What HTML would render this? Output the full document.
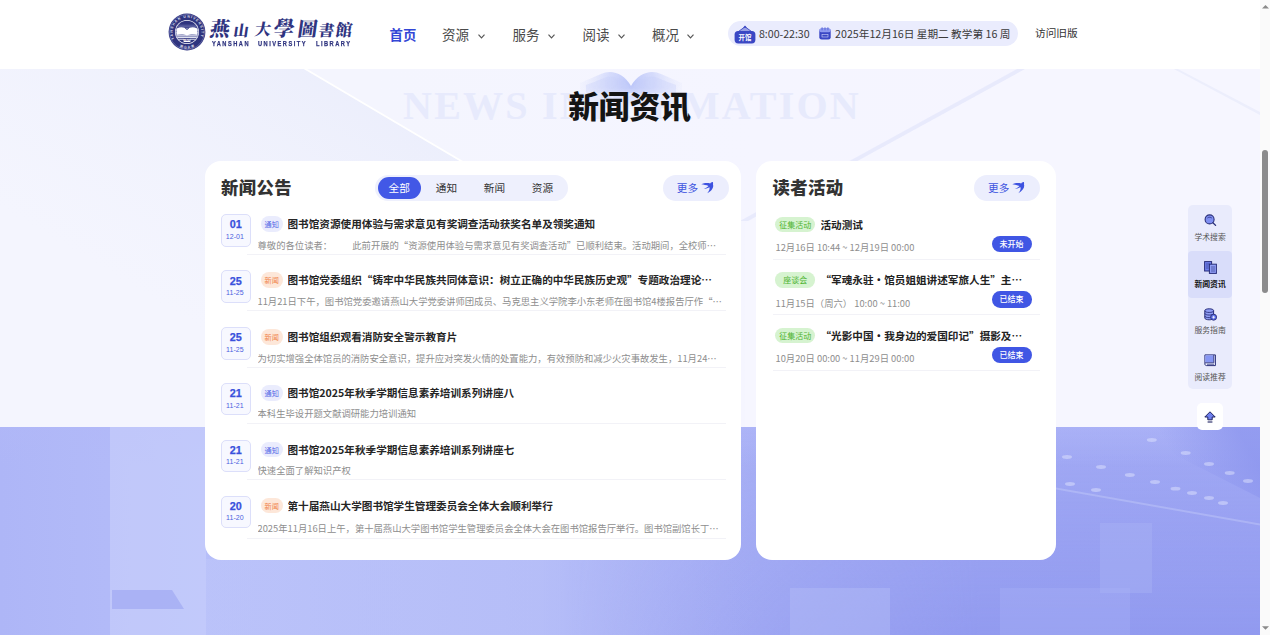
<!DOCTYPE html>
<html lang="zh-CN">
<head>
<meta charset="utf-8">
<title>燕山大学图书馆</title>
<style>
*{box-sizing:border-box;margin:0;padding:0}
html,body{width:1270px;height:635px;overflow:hidden;background:#f4f5ff;}
body{position:relative;font-family:"Noto Sans CJK SC","Liberation Sans",sans-serif;color:#1a1a1a;}
.abs{position:absolute}
#bg{position:absolute;left:0;top:68px;width:1260px;height:567px;overflow:hidden}
#header{position:absolute;left:0;top:0;width:1260px;height:68.8px;background:#fff}
#logocn{left:210px;top:10px;width:145px;height:36px;font-family:"Noto Serif CJK SC","Liberation Serif",serif;font-weight:900;color:#2f347f;white-space:nowrap}
#logocn span{position:absolute;text-align:center;transform:skewX(-8deg)}
#logoen{left:212.1px;top:40.2px;width:140px;height:8px;font-family:"Liberation Sans",sans-serif;font-weight:bold;font-size:7.3px;line-height:8px;letter-spacing:1.9px;color:#2f347f;white-space:nowrap}
#logoen span{position:absolute;top:0;-webkit-text-stroke:0.25px #2f347f;transform:scaleX(0.78);transform-origin:0 0}
.nav{position:absolute;top:22.9px;font-size:13.5px;line-height:22px;color:#4a4a4a;white-space:nowrap}
.nav.on{color:#3347d6;font-weight:bold;font-size:13.4px}
.chv{top:33.6px}
#pill{position:absolute;left:727.5px;top:20.7px;width:290.6px;height:25.8px;border-radius:13px;background:#eaecfd;font-size:10.67px;color:#3a3a3a;white-space:nowrap}
#ptime{left:31.5px;top:0.5px;line-height:25.8px;letter-spacing:-0.05px}
#pdate{left:107.6px;top:0.5px;line-height:25.8px}
#old{position:absolute;left:1035px;top:23.5px;font-size:10.67px;line-height:18px;color:#333;white-space:nowrap}
#bigen{position:absolute;left:0;top:83px;width:1259px;text-align:center;font-family:"Liberation Serif",serif;font-weight:bold;font-size:40px;letter-spacing:2.2px;color:#e7eafc;line-height:46px;white-space:nowrap;padding-left:5px}
#bigcn{position:absolute;left:0;top:83.2px;width:1259px;text-align:center;font-weight:900;font-size:30.67px;line-height:44px;color:#141414;white-space:nowrap}
.card{position:absolute;top:161px;height:398.7px;background:#fff;border-radius:16px}
#c1{left:205px;width:536.3px}
#c2{left:755.5px;width:300.5px}
.ctitle{position:absolute;top:13.1px;font-size:17.33px;font-weight:900;letter-spacing:0.4px;line-height:26px;color:#333;white-space:nowrap}
.more{position:absolute;top:14px;width:65.5px;height:26px;border-radius:13px;background:#eceefd;color:#4055e0;font-size:10.67px;line-height:26px;padding-left:13.8px;white-space:nowrap}
.more .sw{left:38.3px;top:7.3px}
#tabs{position:absolute;left:169.5px;top:13.6px;width:193px;height:26.4px;border-radius:13.2px;background:#eef0fd;font-size:10.67px;line-height:26.4px;color:#333}
#tabs span{position:absolute;top:0;text-align:center;white-space:nowrap}
#tabs .on{left:3px;top:2.3px;width:43.4px;height:21.8px;line-height:21.8px;border-radius:11px;background:#4258e6;color:#fff}
.item{position:absolute;left:16px;width:508px;height:56px}
.date{position:absolute;left:0;top:0;width:30.2px;height:32.6px;border:1px solid #dcdffa;border-radius:5px;background:#f7f8ff;text-align:center;color:#3a50dc;font-family:"Liberation Sans",sans-serif}
.date b{display:block;position:relative;left:-0.4px;-webkit-text-stroke:0.25px #3a50dc;font-size:10.8px;line-height:13px;margin-top:3.3px}
.date i{display:block;position:relative;left:-1.2px;font-style:normal;font-size:7px;line-height:8px;margin-top:1.5px;color:#4a5ee0;letter-spacing:0.1px}
.tag{position:absolute;left:39.5px;top:2px;width:22.5px;height:15.8px;border-radius:8px;font-size:7.2px;line-height:17.4px;text-align:center;white-space:nowrap}
.tag.tz{background:#eaecfd;color:#5568e6}
.tag.xw{background:#fde7d9;color:#f0844a}
.ttl{position:absolute;left:66.5px;top:0;font-size:10.62px;font-weight:bold;line-height:20px;color:#262626;white-space:nowrap;width:430px;overflow:hidden;text-overflow:ellipsis}
.desc{position:absolute;left:36.5px;top:21.5px;font-size:9.33px;line-height:18px;color:#8e8e8e;white-space:nowrap;width:465px;overflow:hidden;text-overflow:ellipsis}
.gap{display:inline-block;width:20.1px;overflow:hidden;vertical-align:top}
.line{position:absolute;left:26px;right:3px;top:39.8px;height:1px;background:#f2f2f7}
.item.last .desc{top:23.5px}
.item.last .line{top:42.9px}
.act{position:absolute;left:17px;width:267px;height:56px}
.gtag{position:absolute;left:2.7px;top:0.4px;width:40.3px;height:15.2px;border-radius:7.6px;background:#d6f3d0;color:#4fb432;font-size:8px;line-height:15.2px;text-align:center;white-space:nowrap}
.attl{position:absolute;left:48px;top:-1.6px;width:206px;font-size:10.62px;font-weight:bold;line-height:20px;color:#222;white-space:nowrap;overflow:hidden;text-overflow:ellipsis}
.atime{position:absolute;left:3px;top:21.5px;font-size:9.33px;line-height:18px;color:#8e8e8e;white-space:nowrap}
.st{position:absolute;left:219px;top:19.3px;width:40px;height:16.4px;border-radius:8.2px;background:#4056e4;color:#fff;font-size:8px;line-height:16.4px;text-align:center;font-weight:500;white-space:nowrap}
.aline{position:absolute;left:0;right:0;top:42px;height:1px;background:#f2f2f7}
#side{position:absolute;left:1187.8px;top:204.6px;width:44.6px;height:184px;border-radius:5px;background:#e9ebfc}
.sit{position:absolute;left:0;width:44.6px;height:46.5px;text-align:center;font-size:7.8px;color:#555;border-radius:4px}
.sit.on{background:#d9ddfa;color:#111;font-weight:bold}
.sit .sic{left:15.8px;top:10px}
.sit span{position:absolute;left:0;width:44.6px;top:26.5px;line-height:12px;white-space:nowrap}
#up{position:absolute;left:1196.8px;top:402.6px;width:26.6px;height:27.2px;border-radius:5px;background:#fff}
#sb{position:absolute;left:1260px;top:0;width:10px;height:635px;background:#fafafa}
#sbt{position:absolute;left:2px;top:150px;width:6px;height:143px;border-radius:3px;background:#8b8b8b}
</style>
</head>
<body>
<div id="bg">
  <svg class="abs" style="left:0;top:0" width="1260" height="567" viewBox="0 0 1260 567">
    <defs>
      <linearGradient id="gtop" x1="0" y1="0" x2="1" y2="0">
        <stop offset="0" stop-color="#f4f5fe"/><stop offset="0.3" stop-color="#f4f5fe"/><stop offset="0.6" stop-color="#f5f5ff"/><stop offset="1" stop-color="#f6f5ff"/>
      </linearGradient>
      <linearGradient id="gbh" x1="0" y1="0" x2="1" y2="0">
        <stop offset="0" stop-color="#aeb6f7"/><stop offset="0.085" stop-color="#b2baf8"/><stop offset="0.165" stop-color="#b6bef9"/><stop offset="0.4" stop-color="#b0b8f7"/><stop offset="0.55" stop-color="#aab2f6"/><stop offset="0.65" stop-color="#a6aef5"/><stop offset="0.85" stop-color="#a3abf5"/><stop offset="1" stop-color="#a2aaf5"/>
      </linearGradient>
      <linearGradient id="gbv" x1="0" y1="0" x2="0" y2="1">
        <stop offset="0" stop-color="#8790ec" stop-opacity="0"/><stop offset="0.35" stop-color="#8790ec" stop-opacity="0.25"/><stop offset="1" stop-color="#8790ec" stop-opacity="0.62"/>
      </linearGradient>
      <linearGradient id="gmk" x1="0" y1="0" x2="1" y2="0"><stop offset="0" stop-color="#000"/><stop offset="0.6" stop-color="#fff"/><stop offset="1" stop-color="#fff"/></linearGradient>
      <mask id="mk" maskUnits="userSpaceOnUse" x="560" y="358" width="700" height="210"><rect x="560" y="358" width="700" height="210" fill="url(#gmk)"/></mask>
      <linearGradient id="gtopfade" x1="0" y1="0" x2="0" y2="1"><stop offset="0" stop-color="#b1b8f8" stop-opacity="0.5"/><stop offset="1" stop-color="#b1b8f8" stop-opacity="0"/></linearGradient>
      <linearGradient id="gfl" gradientUnits="userSpaceOnUse" x1="400" y1="40" x2="250" y2="290"><stop offset="0" stop-color="#e9ecfb" stop-opacity="0.75"/><stop offset="1" stop-color="#eef0fc" stop-opacity="0"/></linearGradient>
      <linearGradient id="gbs" x1="0" y1="0" x2="1" y2="0"><stop offset="0" stop-color="#bec6fa" stop-opacity="0.55"/><stop offset="0.6" stop-color="#bcc4f9" stop-opacity="0.5"/><stop offset="1" stop-color="#a8b0f5" stop-opacity="0"/></linearGradient>
      <linearGradient id="gcr" gradientUnits="userSpaceOnUse" x1="1180" y1="400" x2="1240" y2="365"><stop offset="0" stop-color="#8c95ee" stop-opacity="0"/><stop offset="1" stop-color="#8c95ee" stop-opacity="0.75"/></linearGradient>
      <linearGradient id="gln" x1="0" y1="0" x2="1" y2="0">
        <stop offset="0" stop-color="#e4e7fb" stop-opacity="0"/><stop offset="0.5" stop-color="#e2e5fb"/><stop offset="1" stop-color="#e4e7fb" stop-opacity="0"/>
      </linearGradient>
    </defs>
    <rect x="0" y="0" width="1260" height="359" fill="url(#gtop)"/>
    <path d="M0 0 L303 0 L460 93 L460 300 L0 300 Z" fill="url(#gfl)"/>
    <path d="M302 0 L305.5 0 L463 93 L459.5 93 Z" fill="#fff"/>
    <path d="M1019 0 L1027 0 L748 153 L740 153 Z" fill="#e3e6fb" opacity="0.7"/>
    <path d="M1027 0 L1260 0 L1260 359 L745 359 L745 155 Z" fill="#f7f6ff" opacity="0.6"/>
    <path d="M1172 0 L1176 0 L1260 44 L1260 47 Z" fill="#eceefc"/>
    <rect x="0" y="359" width="1260" height="208" fill="url(#gbh)"/>
    <rect x="560" y="359" width="700" height="208" fill="url(#gbv)" mask="url(#mk)"/>
    <rect x="0" y="359" width="1260" height="40" fill="url(#gtopfade)"/>
    <rect x="110" y="359" width="96" height="208" fill="#c9d0fc" opacity="0.6"/>
    <path d="M112 522 L172 522 L184 541 L112 541 Z" fill="#98a1f0" opacity="0.55"/>
    <rect x="206" y="491" width="560" height="76" fill="url(#gbs)"/>
    <rect x="790" y="520" width="100" height="47" fill="#b4bcf7" opacity="0.45"/>
    <rect x="1000" y="520" width="130" height="47" fill="#a9b1f5" opacity="0.35"/>
    <path d="M1120 359 L1260 359 L1260 430 Z" fill="url(#gcr)"/>
    <rect x="1100" y="455" width="52" height="70" fill="#aab3f6" opacity="0.4"/>
    <ellipse cx="1151.8" cy="372.0" rx="5" ry="1.9" fill="#dfe3fd" opacity="0.5"/><ellipse cx="1185.7" cy="385.0" rx="5" ry="1.9" fill="#dfe3fd" opacity="0.5"/><ellipse cx="1209.0" cy="396.0" rx="5" ry="1.9" fill="#dfe3fd" opacity="0.5"/><ellipse cx="1229.7" cy="405.0" rx="5" ry="1.9" fill="#dfe3fd" opacity="0.5"/><ellipse cx="1248.0" cy="413.0" rx="5" ry="1.9" fill="#dfe3fd" opacity="0.5"/><ellipse cx="1067.0" cy="389.0" rx="5" ry="1.9" fill="#dfe3fd" opacity="0.5"/><ellipse cx="1101.0" cy="399.0" rx="5" ry="1.9" fill="#dfe3fd" opacity="0.5"/><ellipse cx="1129.8" cy="407.0" rx="5" ry="1.9" fill="#dfe3fd" opacity="0.5"/><ellipse cx="1155.0" cy="414.0" rx="5" ry="1.9" fill="#dfe3fd" opacity="0.5"/><ellipse cx="1175.5" cy="420.7" rx="5" ry="1.9" fill="#dfe3fd" opacity="0.5"/><ellipse cx="1192.0" cy="425.0" rx="5" ry="1.9" fill="#dfe3fd" opacity="0.5"/><ellipse cx="1209.0" cy="430.0" rx="5" ry="1.9" fill="#dfe3fd" opacity="0.5"/><ellipse cx="1223.0" cy="435.0" rx="5" ry="1.9" fill="#dfe3fd" opacity="0.5"/><ellipse cx="1070.0" cy="416.0" rx="5" ry="1.9" fill="#dfe3fd" opacity="0.5"/><ellipse cx="1096.0" cy="422.0" rx="5" ry="1.9" fill="#dfe3fd" opacity="0.5"/>
    <path d="M1056 419.5 L1260 455.5 L1260 457.5 L1056 421.5 Z" fill="#c9cffb" opacity="0.4"/>
  </svg>
</div>
<div id="header">
  <svg class="abs" style="left:168.3px;top:12.6px" width="38" height="38" viewBox="0 0 38 38">
    <defs><path id="arc1" d="M7.2 27.3 A14.4 14.4 0 1 1 30.8 27.3"/><path id="arc2" d="M2.4 19 A16.6 16.6 0 0 0 35.6 19"/><clipPath id="inn"><circle cx="19" cy="19" r="11.3"/></clipPath></defs>
    <circle cx="19" cy="19" r="18.4" fill="#2f347f"/>
    <circle cx="19" cy="19" r="17.4" fill="none" stroke="#8f93c4" stroke-width="0.5"/>
    <text font-family="Liberation Sans, sans-serif" font-weight="bold" font-size="3.4" fill="#e9eaf6" letter-spacing="1.1"><textPath href="#arc1" startOffset="1.5">YANSHAN UNIVERSITY</textPath></text>
    <text font-family="Noto Sans CJK SC, sans-serif" font-weight="bold" font-size="3.2" fill="#e9eaf6" letter-spacing="1"><textPath href="#arc2" startOffset="18.2">燕山大学</textPath></text>
    <circle cx="19" cy="19" r="12" fill="#fff"/>
    <circle cx="19" cy="19" r="11.3" fill="#2f347f"/>
    <g clip-path="url(#inn)">
      <path d="M7 12.2 H31 M7 13.6 H31 M7 15 H31" stroke="#8a8fc6" stroke-width="0.5"/>
      <rect x="7" y="15.6" width="24" height="9.6" fill="#dfe1f1"/>
      <path d="M7 17 H31 M7 18.6 H31 M7 20.2 H31 M7 21.8 H31 M7 23.4 H31" stroke="#2f347f" stroke-width="0.45"/>
      <path d="M9 15.4 C12.5 13.6 16.5 14 19 16.6 C21.5 14 25.5 13.6 29 15.4 L29 21.8 C25.5 20.4 21.5 20.8 19 22.6 C16.5 20.8 12.5 20.4 9 21.8 Z" fill="#fff"/>
      <path d="M16.8 14.8 L19 16.8 L21.2 14.8" fill="none" stroke="#2f347f" stroke-width="0.7"/>
      <path d="M7 26.4 H31" stroke="#fff" stroke-width="0.7"/>
      <rect x="15.6" y="25.9" width="6.8" height="3" rx="0.5" fill="#fff"/>
      <text x="19" y="28.4" font-family="Liberation Sans, sans-serif" font-weight="bold" font-size="2.6" fill="#2f347f" text-anchor="middle">1920</text>
    </g>
  </svg>
  <div class="abs" id="logocn"><span style="left:-0.4px;top:8.0px;font-size:20px;width:20px;height:20px;line-height:20px">燕</span><span style="left:23.8px;top:12.1px;font-size:15px;width:15px;height:15px;line-height:15px">山</span><span style="left:44.5px;top:10.6px;font-size:16px;width:16px;height:16px;line-height:16px">大</span><span style="left:64.0px;top:7.3px;font-size:21px;width:21px;height:21px;line-height:21px">學</span><span style="left:87.9px;top:8.6px;font-size:19.5px;width:19.5px;height:19.5px;line-height:19.5px">圖</span><span style="left:108.9px;top:11.6px;font-size:15.5px;width:15.5px;height:15.5px;line-height:15.5px">書</span><span style="left:125.6px;top:11.1px;font-size:16.5px;width:16.5px;height:16.5px;line-height:16.5px">館</span></div>
  <div class="abs" id="logoen"><span style="left:0">YANSHAN</span><span style="left:45.9px">UNIVERSITY</span><span style="left:103.8px">LIBRARY</span></div>
  <div class="nav on" style="left:389.5px">首页</div>
  <div class="nav" style="left:442px">资源</div>
  <div class="nav" style="left:512.5px">服务</div>
  <div class="nav" style="left:582.5px">阅读</div>
  <div class="nav" style="left:652px">概况</div>
  <svg class="abs chv" style="left:477.5px" width="7" height="5" viewBox="0 0 7 5"><path d="M0.5 0.7 L3.5 3.9 L6.5 0.7" fill="none" stroke="#555" stroke-width="1.15"/></svg>
  <svg class="abs chv" style="left:548px" width="7" height="5" viewBox="0 0 7 5"><path d="M0.5 0.7 L3.5 3.9 L6.5 0.7" fill="none" stroke="#555" stroke-width="1.15"/></svg>
  <svg class="abs chv" style="left:617.5px" width="7" height="5" viewBox="0 0 7 5"><path d="M0.5 0.7 L3.5 3.9 L6.5 0.7" fill="none" stroke="#555" stroke-width="1.15"/></svg>
  <svg class="abs chv" style="left:687px" width="7" height="5" viewBox="0 0 7 5"><path d="M0.5 0.7 L3.5 3.9 L6.5 0.7" fill="none" stroke="#555" stroke-width="1.15"/></svg>
  <div id="pill">
    <svg class="abs" style="left:6.5px;top:3.9px" width="22" height="19" viewBox="0 0 22 19">
      <path d="M11 0.6 L13 2.8 L9 2.8 Z" fill="#3a47c4"/>
      <path d="M11 1.8 L18.5 7.2 L3.5 7.2 Z" fill="#3a47c4" fill-opacity="0.45" stroke="#3a47c4" stroke-width="0.9"/>
      <rect x="0.6" y="6" width="20.8" height="12.4" rx="3.6" fill="#3a47c4"/>
      <text x="11" y="15.2" font-size="6.4" font-weight="bold" fill="#fff" text-anchor="middle" font-family="Liberation Sans, Noto Sans CJK SC, sans-serif">开馆</text>
    </svg>
    <span class="abs" id="ptime">8:00-22:30</span>
    <svg class="abs" style="left:91.8px;top:6.6px" width="12" height="13" viewBox="0 0 12 13">
      <rect x="0.3" y="1.6" width="11.4" height="11" rx="2.4" fill="#3a47c4"/>
      <rect x="0.3" y="1.6" width="11.4" height="3.6" rx="1.8" fill="#8f9af0"/>
      <rect x="2.4" y="0.2" width="1.4" height="3.2" rx="0.7" fill="#6a77e0"/>
      <rect x="5.3" y="0.2" width="1.4" height="3.2" rx="0.7" fill="#6a77e0"/>
      <rect x="8.2" y="0.2" width="1.4" height="3.2" rx="0.7" fill="#6a77e0"/>
      <rect x="3" y="7.4" width="6" height="2.6" fill="none" stroke="#cfd5fb" stroke-width="0.6"/>
    </svg>
    <span class="abs" id="pdate">2025年12月16日 星期二 教学第 16 周</span>
  </div>
  <div id="old">访问旧版</div>
</div>

<svg class="abs" style="left:576.6px;top:69px" width="108" height="42" viewBox="0 0 108 42">
  <defs><radialGradient id="bk" gradientUnits="userSpaceOnUse" cx="54" cy="14" r="54"><stop offset="0" stop-color="#b7c2f8" stop-opacity="0.95"/><stop offset="0.45" stop-color="#c9d1fa" stop-opacity="0.7"/><stop offset="1" stop-color="#e3e7fc" stop-opacity="0.1"/></radialGradient>
  <linearGradient id="bkf" x1="0" y1="0" x2="0" y2="1"><stop offset="0" stop-color="#fff"/><stop offset="0.45" stop-color="#fff"/><stop offset="1" stop-color="#000"/></linearGradient>
  <mask id="bkm"><rect x="0" y="0" width="108" height="42" fill="url(#bkf)"/></mask></defs>
  <g mask="url(#bkm)">
  <path d="M54 17 C47 4 34 0 24 5 C15 9 8 12 3 14 L3 40 L105 40 L105 14 C100 12 93 9 84 5 C74 0 61 4 54 17 Z" fill="url(#bk)"/>
  <path d="M54 22 C48 9 36 5 27 9 C20 12 14 14 9 16 L9 40 L99 40 L99 16 C94 14 88 12 81 9 C72 5 60 9 54 22 Z" fill="#c5cefa" opacity="0.35"/>
  </g>
</svg>
<div id="bigen">NEWS INFORMATION</div>
<div id="bigcn">新闻资讯</div>

<div class="card" id="c1">
  <div class="ctitle" style="left:16px">新闻公告</div>
  <div id="tabs"><span class="on">全部</span><span style="left:48px;width:48px">通知</span><span style="left:96px;width:48px">新闻</span><span style="left:144px;width:48px">资源</span></div>
  <div class="more" style="left:458px">更多<svg class="abs sw" width="13" height="12" viewBox="0 0 13 12"><path d="M0.3 2.3 C3 0.8 6.5 0.6 9.2 1.4 C9.8 0.6 10.8 0 11.8 0 C12.2 0.8 12.1 1.6 12 2.4 C12.9 5.2 11 8.6 6.3 11.3 C8.2 9 8.9 7 8.5 5.3 C7.3 5.8 5.2 6.7 2.8 7 C5 6 6.6 5 7.5 3.9 C5.4 3.1 2.6 2.7 0.3 2.3 Z" fill="#3d52e0"/></svg></div>
  <div class="item" style="top:53.0px"><div class="date"><b>01</b><i>12-01</i></div><span class="tag tz">通知</span><div class="ttl">图书馆资源使用体验与需求意见有奖调查活动获奖名单及领奖通知</div><div class="desc">尊敬的各位读者：<span class="gap">　　</span>此前开展的“资源使用体验与需求意见有奖调查活动”已顺利结束。活动期间，全校师生积极参与</div><div class="line"></div></div>
  <div class="item" style="top:109.3px"><div class="date"><b>25</b><i>11-25</i></div><span class="tag xw">新闻</span><div class="ttl">图书馆党委组织“铸牢中华民族共同体意识：树立正确的中华民族历史观”专题政治理论学习</div><div class="desc">11月21日下午，图书馆党委邀请燕山大学党委讲师团成员、马克思主义学院李小东老师在图书馆4楼报告厅作“铸牢中华民族</div><div class="line"></div></div>
  <div class="item" style="top:166.2px"><div class="date"><b>25</b><i>11-25</i></div><span class="tag xw">新闻</span><div class="ttl">图书馆组织观看消防安全警示教育片</div><div class="desc">为切实增强全体馆员的消防安全意识，提升应对突发火情的处置能力，有效预防和减少火灾事故发生，11月24日下午，图书馆</div><div class="line"></div></div>
  <div class="item" style="top:221.9px"><div class="date"><b>21</b><i>11-21</i></div><span class="tag tz">通知</span><div class="ttl">图书馆2025年秋季学期信息素养培训系列讲座八</div><div class="desc">本科生毕设开题文献调研能力培训通知</div><div class="line"></div></div>
  <div class="item" style="top:278.5px"><div class="date"><b>21</b><i>11-21</i></div><span class="tag tz">通知</span><div class="ttl">图书馆2025年秋季学期信息素养培训系列讲座七</div><div class="desc">快速全面了解知识产权</div><div class="line"></div></div>
  <div class="item last" style="top:334.5px"><div class="date"><b>20</b><i>11-20</i></div><span class="tag xw">新闻</span><div class="ttl">第十届燕山大学图书馆学生管理委员会全体大会顺利举行</div><div class="desc">2025年11月16日上午，第十届燕山大学图书馆学生管理委员会全体大会在图书馆报告厅举行。图书馆副馆长丁一出席</div><div class="line"></div></div>

</div>

<div class="card" id="c2">
  <div class="ctitle" style="left:17px">读者活动</div>
  <div class="more" style="left:218.7px">更多<svg class="abs sw" width="13" height="12" viewBox="0 0 13 12"><path d="M0.3 2.3 C3 0.8 6.5 0.6 9.2 1.4 C9.8 0.6 10.8 0 11.8 0 C12.2 0.8 12.1 1.6 12 2.4 C12.9 5.2 11 8.6 6.3 11.3 C8.2 9 8.9 7 8.5 5.3 C7.3 5.8 5.2 6.7 2.8 7 C5 6 6.6 5 7.5 3.9 C5.4 3.1 2.6 2.7 0.3 2.3 Z" fill="#3d52e0"/></svg></div>
  <div class="act" style="top:55.5px"><span class="gtag">征集活动</span><div class="attl">活动测试</div><div class="atime">12月16日 10:44 ~ 12月19日 00:00</div><span class="st">未开始</span><div class="aline"></div></div>
  <div class="act" style="top:111.0px"><span class="gtag">座谈会</span><div class="attl">“军魂永驻・馆员姐姐讲述军旅人生”主题座谈会</div><div class="atime">11月15日（周六） 10:00 ~ 11:00</div><span class="st">已结束</span><div class="aline"></div></div>
  <div class="act" style="top:166.5px"><span class="gtag">征集活动</span><div class="attl">“光影中国・我身边的爱国印记”摄影及征文活动</div><div class="atime">10月20日 00:00 ~ 11月29日 00:00</div><span class="st">已结束</span><div class="aline"></div></div>

</div>

<div id="side">
  <div class="sit" style="top:0"><svg class="abs sic" style="top:9.6px" width="13" height="13" viewBox="0 0 13 13"><circle cx="5.6" cy="5.4" r="4.5" fill="#7f8ff2" stroke="#2a2f7a" stroke-width="1.1"/><path d="M3.4 4 C4.6 3 6.6 3 7.8 4" fill="none" stroke="#2a2f7a" stroke-width="0.8"/><path d="M8.9 8.7 L11.6 11.4" stroke="#2a2f7a" stroke-width="1.3" stroke-linecap="round"/></svg><span>学术搜索</span></div>
  <div class="sit on" style="top:46.5px"><svg class="abs sic" width="13" height="13" viewBox="0 0 13 13"><rect x="0.6" y="0.6" width="7" height="9.4" fill="#6f80ee" stroke="#2a2f7a" stroke-width="1"/><rect x="5.4" y="3.2" width="7" height="9.2" fill="#8f9df5" stroke="#2a2f7a" stroke-width="1"/><path d="M2 3 H6 M2 5 H4.6 M2 7 H4.6 M7 6 H11 M7 8 H11 M7 10 H11" stroke="#2a2f7a" stroke-width="0.6"/></svg><span>新闻资讯</span></div>
  <div class="sit" style="top:93px"><svg class="abs sic" width="13" height="13" viewBox="0 0 13 13"><path d="M0.8 2.6 C0.8 0.2 9.6 0.2 9.6 2.6 L9.6 10 C9.6 12.4 0.8 12.4 0.8 10 Z" fill="#8f9df5" stroke="#2a2f7a" stroke-width="1"/><path d="M0.8 2.8 C0.8 5 9.6 5 9.6 2.8 M0.8 5.4 C0.8 7.6 9.6 7.6 9.6 5.4 M0.8 8 C0.8 10.2 9.6 10.2 9.6 8" fill="none" stroke="#2a2f7a" stroke-width="0.9"/><circle cx="9.6" cy="9.2" r="3" fill="#5b6de6" stroke="#2a2f7a" stroke-width="0.9"/><path d="M9.6 7.8 V10.6 M8.2 9.2 H11" stroke="#fff" stroke-width="0.8"/></svg><span>服务指南</span></div>
  <div class="sit" style="top:139.5px"><svg class="abs sic" width="13" height="13" viewBox="0 0 13 13"><path d="M0.9 0.9 H11.4 V11.6 H2.6 C1.6 11.6 0.9 11 0.9 10 Z" fill="#eef0fe" stroke="#2a2f7a" stroke-width="1" stroke-linejoin="round"/><rect x="1.4" y="1.4" width="8.2" height="7" fill="#8595f3"/><path d="M9.8 1 V8.8 H1.2" fill="none" stroke="#2a2f7a" stroke-width="0.9"/><path d="M3 10.3 H10" stroke="#2a2f7a" stroke-width="0.7"/></svg><span>阅读推荐</span></div>
</div>
<div id="up"><svg class="abs" style="left:7.5px;top:8.5px" width="12" height="12" viewBox="0 0 12 12"><path d="M6 0.8 L11.2 6 H8.2 V8.8 H3.8 V6 H0.8 Z" fill="#6f80ee" stroke="#1e2260" stroke-width="1" stroke-linejoin="round"/><path d="M3.6 11 H8.4" stroke="#1e2260" stroke-width="1.1"/></svg></div>

<div id="sb"><div id="sbt"></div>
<svg class="abs" style="left:2px;top:4.6px" width="7" height="4" viewBox="0 0 7 4"><path d="M0 3.6 L3.5 0 L7 3.6 Z" fill="#8a8a8a"/></svg>
<svg class="abs" style="left:2px;top:626px" width="7" height="4" viewBox="0 0 7 4"><path d="M0 0.2 L3.5 3.8 L7 0.2 Z" fill="#8a8a8a"/></svg>
</div>
</body>
</html>
